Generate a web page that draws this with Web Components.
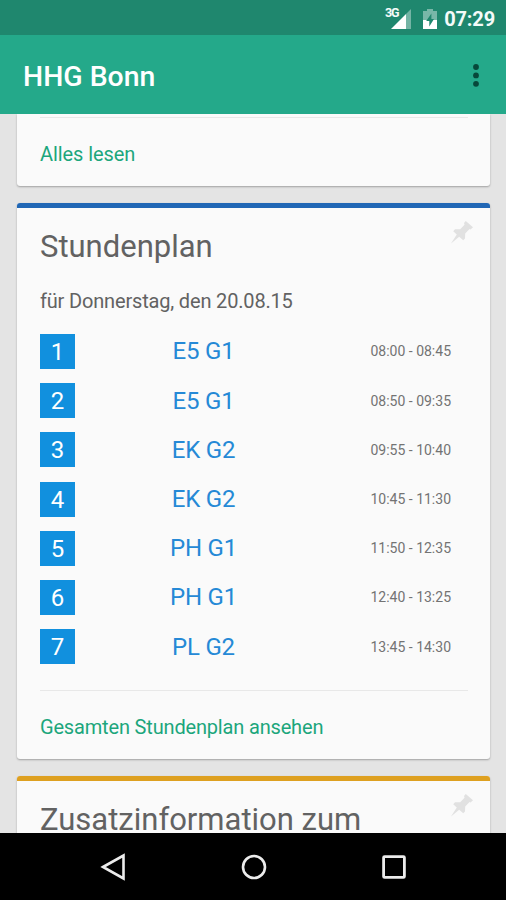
<!DOCTYPE html>
<html lang="de">
<head>
<meta charset="utf-8">
<title>HHG Bonn</title>
<style>
    html, body {
        margin: 0;
        height: 100%;
        overflow: hidden;
        background: #e4e4e4;
        font-family: Roboto, "Noto Sans", sans-serif;
    }
</style>
</head>
<body>
<school-app>
    <status-bar slot="top" network="3G">07:29</status-bar>
    <app-bar slot="top">HHG Bonn</app-bar>

    <info-card class="first">
        <span slot="action">Alles lesen</span>
    </info-card>

    <info-card color="#2167b5" heading="Stundenplan">
        <time-table date="für Donnerstag, den 20.08.15">
            <lesson-row number="1" time="08:00 - 08:45">E5 G1</lesson-row>
            <lesson-row number="2" time="08:50 - 09:35">E5 G1</lesson-row>
            <lesson-row number="3" time="09:55 - 10:40">EK G2</lesson-row>
            <lesson-row number="4" time="10:45 - 11:30">EK G2</lesson-row>
            <lesson-row number="5" time="11:50 - 12:35">PH G1</lesson-row>
            <lesson-row number="6" time="12:40 - 13:25">PH G1</lesson-row>
            <lesson-row number="7" time="13:45 - 14:30">PL G2</lesson-row>
        </time-table>
        <span slot="action">Gesamten Stundenplan ansehen</span>
    </info-card>

    <info-card color="#dea020" heading="Zusatzinformation zum"></info-card>

    <nav-bar slot="bottom"></nav-bar>
</school-app>

<script>
class BaseElement extends HTMLElement {
    constructor() {
        super();
        this.attachShadow({ mode: 'open' });
    }

    connectedCallback() {
        this.shadowRoot.innerHTML = `
            <style>${this.css().trim()}</style>
            ${this.template().trim()}
        `;
    }
}


class SchoolApp extends BaseElement {
    css = () => `
        :host {
            display: flex;
            flex-direction: column;
            width: 506px;
            height: 900px;
            overflow: hidden;
        }

        main {
            flex: 1;
            min-height: 0;
            overflow: hidden;
            display: flex;
            flex-direction: column;
            gap: 17px;
            padding: 0 16px 0 17.4px;
            background: #e4e4e4;
        }
    `;

    template = () => `
        <slot name="top"></slot>
        <main><slot></slot></main>
        <slot name="bottom"></slot>
    `;
}


class StatusBar extends BaseElement {
    css = () => `
        :host {
            display: flex;
            flex: none;
            justify-content: flex-end;
            align-items: center;
            box-sizing: border-box;
            height: 35.4px;
            padding: 2px 11px 0 0;
            background: #1f876e;
            color: #f4fbf9;
        }

        svg {
            display: block;
            margin-right: 7px;
        }

        .network {
            align-self: flex-start;
            margin: 4px 1px 0 0;
            font-size: 12.5px;
            line-height: 14px;
            font-weight: 700;
            letter-spacing: -1.2px;
        }

        .signal {
            margin: 0 12px 0 -8px;
        }

        .time {
            font-size: 20px;
            line-height: 24px;
            font-weight: 700;
            letter-spacing: -0.15px;
        }
    `;

    template = () => `
        <span class="network">${this.getAttribute('network')}</span>
        <svg class="signal" width="20" height="20" viewBox="0 0 20 20">
            <path d="M15 5 20 0V20H15Z" fill="#fff" opacity=".38"/>
            <path d="M0 20 15 5V20Z" fill="#fff"/>
        </svg>
        <svg width="14" height="20" viewBox="0 0 14 20">
            <path d="M4 0H10V2H14V11H0V2H4Z" fill="#fff" opacity=".4"/>
            <path d="M0 11H14V20H0Z" fill="#fff"/>
            <path d="M8.4 4.5 3.2 12H6.3V17.5L11 10H8.4Z" fill="#1f876e"/>
        </svg>
        <span class="time"><slot></slot></span>
    `;
}


class AppBar extends BaseElement {
    css = () => `
        :host {
            display: flex;
            flex: none;
            justify-content: space-between;
            align-items: center;
            box-sizing: border-box;
            height: 78.6px;
            padding: 2px 27px 0 23px;
            background: #24a98a;
            color: #fff;
        }

        .title {
            padding-top: 2px;
            font-size: 28.4px;
            line-height: 32px;
            font-weight: 500;
        }
    `;

    template = () => `
        <span class="title"><slot></slot></span>
        <svg width="6" height="24" viewBox="0 0 6 24" fill="#07483a">
            <circle cx="3" cy="3" r="2.9"/>
            <circle cx="3" cy="11.4" r="2.9"/>
            <circle cx="3" cy="19.8" r="2.9"/>
        </svg>
    `;
}


class InfoCard extends BaseElement {
    css = () => `
        :host {
            display: flex;
            flex: none;
            flex-direction: column;
            box-sizing: border-box;
            border-radius: 3px;
            background: #fafafa;
            box-shadow: 0 1px 2px rgba(0, 0, 0, .3);
            overflow: hidden;
        }

        :host(.first) {
            border-radius: 0 0 3px 3px;
        }

        .stripe {
            height: 5px;
            background: ${this.getAttribute('color')};
        }

        header {
            display: flex;
            justify-content: space-between;
            align-items: flex-start;
            padding: 12px 16px 0 22.6px;
        }

        h2 {
            margin: 8.6px 0 0;
            font-size: 31px;
            line-height: 36px;
            font-weight: 400;
            color: #626262;
        }

        .pin {
            display: block;
        }

        footer {
            margin: 0 22px 0 22.6px;
            padding: 24px 0 20.5px;
            border-top: 1.5px solid #e8e8e8;
            font-size: 20px;
            line-height: 24px;
            letter-spacing: -0.17px;
            color: #1ca67c;
        }

        :host(.first) footer {
            margin-top: 3px;
            letter-spacing: -0.08px;
        }
    `;

    template = () => {
        const heading = this.getAttribute('heading');
        const action = this.querySelector('[slot="action"]');
        return `
            ${heading ? `
            <div class="stripe"></div>
            <header>
                <h2>${heading}</h2>
                <svg class="pin" width="24" height="24" viewBox="0 0 24 24">
                    <path d="M15.8 1 23 7.2 20.5 9.4 19.5 9 15.2 13.6 15 18.5 13.2 20.2 9.2 16.8 1 23.5 6.8 14.4 3.2 11.2 5 9.3 10.2 9.2 14.5 4.8 14 3Z" fill="#e1e1e1"/>
                </svg>
            </header>` : ''}
            <slot></slot>
            ${action ? '<footer><slot name="action"></slot></footer>' : ''}
        `;
    }
}


class TimeTable extends BaseElement {
    css = () => `
        :host {
            display: flex;
            flex-direction: column;
            padding: 24.2px 39px 27.4px 22.6px;
        }

        p {
            margin: 0 0 19.2px;
            font-size: 20px;
            line-height: 24px;
            letter-spacing: -0.17px;
            color: #626262;
        }

        .rows {
            display: grid;
            gap: 14.2px;
        }
    `;

    template = () => `
        <p>${this.getAttribute('date')}</p>
        <div class="rows"><slot></slot></div>
    `;
}


class LessonRow extends BaseElement {
    css = () => `
        :host {
            display: grid;
            grid-template-columns: 35px 257px 1fr;
            align-items: center;
            height: 35px;
        }

        .number {
            height: 35px;
            background: #1190de;
            color: #fff;
            font-size: 24px;
            line-height: 37px;
            text-align: center;
        }

        .course {
            font-size: 24px;
            line-height: 38px;
            letter-spacing: -0.2px;
            text-align: center;
            color: #2589d6;
        }

        .time {
            font-size: 14px;
            line-height: 36px;
            text-align: right;
            white-space: nowrap;
            color: #737373;
        }
    `;

    template = () => `
        <span class="number">${this.getAttribute('number')}</span>
        <span class="course"><slot></slot></span>
        <span class="time">${this.getAttribute('time')}</span>
    `;
}


class NavBar extends BaseElement {
    css = () => `
        :host {
            display: flex;
            flex: none;
            justify-content: space-between;
            align-items: center;
            box-sizing: border-box;
            height: 66.6px;
            padding: 0 98px 0 100px;
            background: #000;
        }
    `;

    template = () => `
        <svg width="28" height="28" viewBox="0 0 28 28" fill="none" stroke="#ececec" stroke-width="2.6">
            <path d="M3 14 23.5 2.5V25.5Z"/>
        </svg>
        <svg width="28" height="28" viewBox="0 0 28 28" fill="none" stroke="#ececec" stroke-width="2.6">
            <circle cx="14" cy="14" r="11"/>
        </svg>
        <svg width="28" height="28" viewBox="0 0 28 28" fill="none" stroke="#ececec" stroke-width="2.8">
            <rect x="3.6" y="3.6" width="20.8" height="20.8" rx="1"/>
        </svg>
    `;
}

customElements.define('school-app', SchoolApp);
customElements.define('status-bar', StatusBar);
customElements.define('app-bar', AppBar);
customElements.define('info-card', InfoCard);
customElements.define('time-table', TimeTable);
customElements.define('lesson-row', LessonRow);
customElements.define('nav-bar', NavBar);
</script>
</body>
</html>
